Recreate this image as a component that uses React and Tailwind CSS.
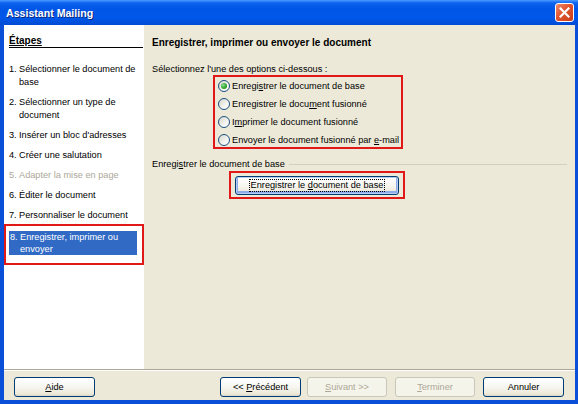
function CloseBtn() {
  return (
    <div className="w-[19px] h-[19px] rounded-[3px] border border-white bg-[linear-gradient(135deg,#ef8b6c_0%,#e0532e_45%,#c8401b_100%)] flex items-center justify-center">
      <svg width="11" height="11" viewBox="0 0 11 11">
        <path d="M1.5 1.5 L9.5 9.5 M9.5 1.5 L1.5 9.5" stroke="white" strokeWidth="2.2" strokeLinecap="square" />
      </svg>
    </div>
  );
}

function Radio({ checked, children }) {
  return (
    <div className="h-[18px] shrink-0 flex items-center">
      <span className="w-[12px] h-[12px] shrink-0 rounded-full border border-[#1c5180] bg-[linear-gradient(135deg,#d5d4cb_0%,#f4f4f0_60%,#ffffff_100%)] flex items-center justify-center">
        {checked && (
          <span className="w-[6px] h-[6px] rounded-full bg-[radial-gradient(circle_at_35%_35%,#8fe08f_0%,#2fa52f_55%,#1a8a1a_100%)]" />
        )}
      </span>
      <span className="ml-[2px] leading-[13px]">{children}</span>
    </div>
  );
}

function Btn({ w, disabled, children, className = "" }) {
  return (
    <div
      className={
        "h-[20px] rounded-[3px] flex items-center justify-center leading-[13px] " +
        (disabled
          ? "border border-[#c9c7ba] bg-[#f5f4ea] text-[#aca899] "
          : "border border-[#003c74] bg-[linear-gradient(to_bottom,#ffffff_0%,#f7f6f1_50%,#ece9d8_90%,#d6d0c5_100%)] ") +
        className
      }
      style={{ width: w }}
    >
      <span className="whitespace-pre">{children}</span>
    </div>
  );
}

export default function App() {
  const steps = [
    { n: "1.", lines: ["Sélectionner le document de", "base"] },
    { n: "2.", lines: ["Sélectionner un type de", "document"] },
    { n: "3.", lines: ["Insérer un bloc d'adresses"] },
    { n: "4.", lines: ["Créer une salutation"] },
    { n: "5.", lines: ["Adapter la mise en page"], gray: true },
    { n: "6.", lines: ["Éditer le document"] },
    { n: "7.", lines: ["Personnaliser le document"] },
  ];
  return (
    <div className="w-[578px] h-[404px] flex flex-col bg-[#0a4fd8] font-['Liberation_Sans',Arial,sans-serif] text-black text-[9.2px] overflow-hidden">
      {/* Title bar */}
      <div className="h-[25px] shrink-0 flex items-center pl-[6px] pr-[4px] bg-[linear-gradient(to_bottom,#4d9bff_0%,#0c63ee_12%,#0056e6_35%,#0058ea_70%,#004bd4_100%)]">
        <span className="text-white font-bold text-[10.6px] leading-[14px] [text-shadow:1px_1px_0_#0a2780]">
          Assistant Mailing
        </span>
        <div className="ml-auto">
          <CloseBtn />
        </div>
      </div>

      {/* Body */}
      <div className="flex-1 ml-[4px] mr-[3px] mb-[4px] bg-[#ece9d8] flex flex-col">
        <div className="h-[344px] flex">
          {/* Left steps panel */}
          <div className="w-[140px] bg-white flex flex-col">
            <div className="ml-[5px] mr-[1px] mt-[10px] h-[13px] leading-[12px] border-b border-black font-bold text-[10px]">
              <span className="underline">Étapes</span>
            </div>
            {steps.map((s, i) => (
              <div
                key={i}
                className={
                  "ml-[5px] flex leading-[13px] " +
                  (i === 0 ? "mt-[15px] " : "mt-[7px] ") +
                  (s.gray ? "text-[#aca899]" : "")
                }
              >
                <span className="w-[10px] shrink-0">{s.n}</span>
                <div className="flex flex-col">
                  {s.lines.map((l, j) => (
                    <span key={j}>{l}</span>
                  ))}
                </div>
              </div>
            ))}
            <div className="mt-[2px] border-2 border-[#e01818] pt-[5px] pb-[8px] pl-[3px] pr-[5px]">
              <div className="bg-[#316ac5] text-white flex leading-[12px] pl-[1px]">
                <span className="w-[10px] shrink-0">8.</span>
                <div className="flex flex-col">
                  <span>Enregistrer, imprimer ou</span>
                  <span>envoyer</span>
                </div>
              </div>
            </div>
          </div>

          {/* Right content */}
          <div className="flex-1 flex flex-col pl-[8px] pt-[11px]">
            <div className="font-bold text-[10px] leading-[13px]">
              Enregistrer, imprimer ou envoyer le document
            </div>
            <div className="mt-[14px] leading-[13px]">Sélectionnez l'une des options ci-dessous :</div>
            <div className="-mt-px ml-[61px] w-[190px] h-[74px] border-2 border-[#e01818] pl-[3px] flex flex-col">
              <Radio checked>
                Enregi<u>s</u>trer le document de base
              </Radio>
              <Radio>
                Enregistrer le docu<u>m</u>ent fusionné
              </Radio>
              <Radio>
                I<u>m</u>primer le document fusionné
              </Radio>
              <Radio>
                Envoyer le document fusionné par <u>e</u>-mail
              </Radio>
            </div>
            <div className="mt-[9px] h-[13px] flex items-center leading-[13px]">
              <span>
                Enregi<u>s</u>trer le document de base
              </span>
              <div className="flex-1 ml-[4px] mr-[8px] h-px bg-[#d0d0bf]" />
            </div>
            <div className="mt-0 ml-[77px] w-[176px] border-2 border-[#e01818] pl-[4px] pt-[3px] pb-[2px]">
              <div className="w-[164px] h-[19px] rounded-[3px] border border-[#003c74] bg-[linear-gradient(to_bottom,#ffffff_0%,#f7f6f1_50%,#ece9d8_90%,#d6d0c5_100%)] shadow-[inset_0_0_0_1px_#b5cdf3,inset_0_-1px_0_2px_#8cabe8] flex items-center justify-center leading-[11px]">
                <span className="outline-1 outline-dotted outline-black px-[1px]">
                  Enregistrer le <u>d</u>ocument de base
                </span>
              </div>
            </div>
          </div>
        </div>

        {/* Separator */}
        <div className="h-[2px] border-t border-[#aca899] border-b border-b-white" />

        {/* Footer */}
        <div className="flex-1 flex items-start pt-[6px] pl-[10px] pr-[11px]">
          <Btn w={81}>
            <u>A</u>ide
          </Btn>
          <div className="flex-1" />
          <Btn w={81}>
            {"<< "}
            <u>P</u>récédent
          </Btn>
          <Btn w={80} disabled className="ml-[6px]">
            <u>S</u>uivant{" >>"}
          </Btn>
          <Btn w={80} disabled className="ml-[8px]">
            <u>T</u>erminer
          </Btn>
          <Btn w={81} className="ml-[8px]">
            Annuler
          </Btn>
        </div>
      </div>
    </div>
  );
}
